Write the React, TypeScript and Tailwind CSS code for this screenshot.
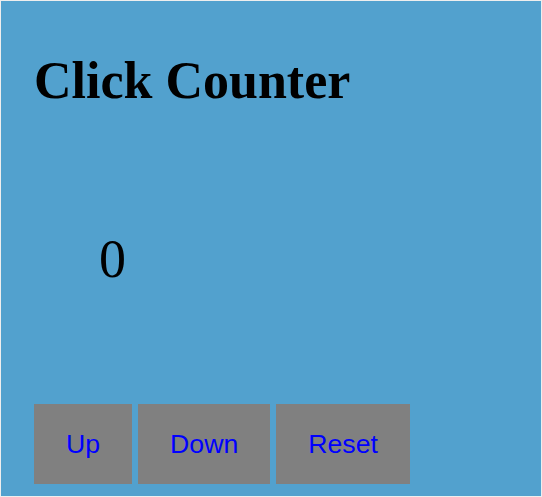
import { useState } from 'react';

const App = () => {
  const [count, setCount] = useState(0);

  return (
    <div className="w-[542px] h-[497px] border border-[#eeeeee] bg-[#52a1ce] pl-[33px] pt-[54px] font-['Liberation_Serif',serif] text-black">
      <h1 className="text-[52px] leading-none font-bold">Click Counter</h1>

      {/* Counter value */}
      <div className="mt-[125px] pl-[65px] text-[54px] leading-none">{count}</div>

      {/* Controls */}
      <div className="mt-[118px] flex gap-[6px] font-['Liberation_Sans',Arial,sans-serif] text-[26.67px] text-[#0000ff]">
        <button className="h-[80px] px-[32px] bg-[#808080]" onClick={() => setCount((c) => c + 1)}>
          Up
        </button>
        <button className="h-[80px] px-[32px] bg-[#808080]" onClick={() => setCount((c) => c - 1)}>
          Down
        </button>
        <button className="h-[80px] px-[32px] bg-[#808080]" onClick={() => setCount(0)}>
          Reset
        </button>
      </div>
    </div>
  );
};

export default App;
